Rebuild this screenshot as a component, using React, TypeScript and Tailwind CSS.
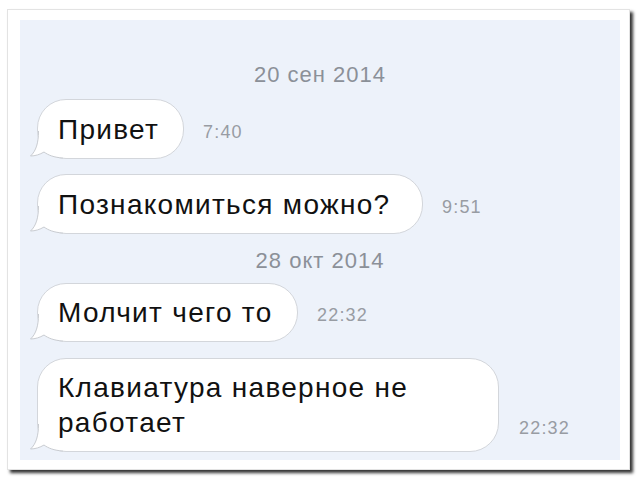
import React from "react";

const font = { fontFamily: '"Liberation Sans", Arial, sans-serif' };

function Tail() {
  return (
    <svg
      className="absolute left-[-9px] bottom-[-1px]"
      width="34"
      height="32"
      viewBox="0 0 34 32"
    >
      <path
        d="M9.5 4 C9.5 16 7 24 1.5 29 C6 29 11 27.5 15 25 C19 28 25 30.5 34 31 L34 4 Z"
        fill="#ffffff"
      />
      <path
        d="M9.5 4 C9.5 16 7 24 1.5 29 C6 29 11 27.5 15 25 C19 28 25 30.5 34 31"
        fill="none"
        stroke="#c9ccd1"
        strokeWidth="1"
      />
    </svg>
  );
}

function Bubble({
  children,
  time,
  width,
  height,
  timeClass,
}: {
  children: React.ReactNode;
  time: string;
  width: string;
  height: string;
  timeClass: string;
}) {
  return (
    <div className="flex items-end">
      <div
        className={`relative bg-white border border-[#d3d6db] rounded-[29px] pl-[20px] flex items-center text-[28px] leading-[35px] tracking-[1.3px] text-[#111] ${width} ${height}`}
      >
        <Tail />
        <div className="relative">{children}</div>
      </div>
      <div className={`text-[18px] leading-[22px] tracking-[1.2px] text-[#989ca3] ${timeClass}`}>{time}</div>
    </div>
  );
}

export default function App() {
  return (
    <div className="w-[641px] h-[482px] bg-white overflow-hidden" style={font}>
      <div className="ml-[7px] mt-[9px] w-[623px] h-[461px] bg-white border border-[#e3e3e3] shadow-[3px_3px_3px_rgba(0,0,0,0.8)]">
        <div className="ml-[12px] mt-[10px] w-[600px] h-[440px] bg-[#edf2fa] flex flex-col pl-[17px]">
          <div className="mt-[44px] h-[22px] text-[22px] leading-[22px] tracking-[1px] text-[#8b9098] text-center pr-[17px]">
            20 сен 2014
          </div>
          <div className="mt-[13px]">
            <Bubble
              time="7:40"
              width="w-[147px]"
              height="h-[60px]"
              timeClass="ml-[19px] mb-[16px]"
            >
              Привет
            </Bubble>
          </div>
          <div className="mt-[15px]">
            <Bubble
              time="9:51"
              width="w-[386px]"
              height="h-[60px]"
              timeClass="ml-[19px] mb-[16px]"
            >
              Познакомиться можно?
            </Bubble>
          </div>
          <div className="mt-[16px] h-[22px] text-[22px] leading-[22px] tracking-[1px] text-[#8b9098] text-center pr-[17px]">
            28 окт 2014
          </div>
          <div className="mt-[11px]">
            <Bubble
              time="22:32"
              width="w-[261px]"
              height="h-[59px]"
              timeClass="ml-[19px] mb-[16px]"
            >
              Молчит чего то
            </Bubble>
          </div>
          <div className="mt-[16px]">
            <Bubble
              time="22:32"
              width="w-[462px]"
              height="h-[94px]"
              timeClass="ml-[20px] mb-[13px]"
            >
              Клавиатура наверное не
              <br />
              работает
            </Bubble>
          </div>
        </div>
      </div>
    </div>
  );
}
